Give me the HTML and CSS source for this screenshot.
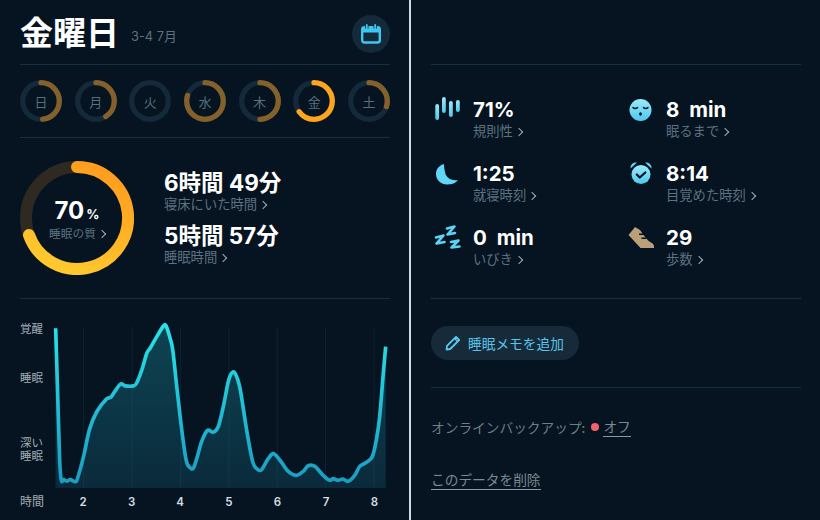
FILE: index.html
```html
<!DOCTYPE html>
<html lang="ja">
<head>
<meta charset="utf-8">
<title>金曜日</title>
<link rel="stylesheet" href="styles.css">
</head>
<body>
<div class="app">
  <section class="panel left">
    <header class="head">
      <div class="title"><h1>金曜日</h1><span class="range">3-4 7月</span></div>
      <button class="cal" aria-label="カレンダー">
        <svg viewBox="0 0 20 20" width="20" height="20"><rect x="1.200" y="3.200" width="17.600" height="15.300" rx="2.200" fill="none" stroke="#3fc8ee" stroke-width="2.400"/><path d="M1.500 3h17v5.500h-17z" fill="#3fc8ee"/><path d="M5.800 .5v4M14.200 .5v4" stroke="#14293a" stroke-width="3.400"/><path d="M5.800 1v3.500M14.200 1v3.500" stroke="#3fc8ee" stroke-width="1.800" stroke-linecap="round"/></svg>
      </button>
    </header>
    <div class="week">
      <div class="day"><svg viewBox="0 0 42 42"><circle class="track" cx="21" cy="21" r="18.300"/><circle class="arc" cx="21" cy="21" r="18.300" pathLength="100" stroke-dasharray="48.500 100"/></svg><span>日</span></div>
      <div class="day"><svg viewBox="0 0 42 42"><circle class="track" cx="21" cy="21" r="18.300"/><circle class="arc" cx="21" cy="21" r="18.300" pathLength="100" stroke-dasharray="41 100"/></svg><span>月</span></div>
      <div class="day"><svg viewBox="0 0 42 42"><circle class="track" cx="21" cy="21" r="18.300"/></svg><span>火</span></div>
      <div class="day"><svg viewBox="0 0 42 42"><circle class="track" cx="21" cy="21" r="18.300"/><circle class="arc" cx="21" cy="21" r="18.300" pathLength="100" stroke-dasharray="80 100"/></svg><span>水</span></div>
      <div class="day"><svg viewBox="0 0 42 42"><circle class="track" cx="21" cy="21" r="18.300"/><circle class="arc" cx="21" cy="21" r="18.300" pathLength="100" stroke-dasharray="50 100"/></svg><span>木</span></div>
      <div class="day"><svg viewBox="0 0 42 42"><circle class="track" cx="21" cy="21" r="18.300"/><circle class="arc now" cx="21" cy="21" r="18.300" pathLength="100" stroke-dasharray="65 100"/></svg><span>金</span></div>
      <div class="day"><svg viewBox="0 0 42 42"><circle class="track" cx="21" cy="21" r="18.300"/><circle class="arc" cx="21" cy="21" r="18.300" pathLength="100" stroke-dasharray="30 100"/></svg><span>土</span></div>
    </div>
    <div class="summary">
      <div class="quality">
        <svg viewBox="0 0 114 114" width="114" height="114">
          <defs><linearGradient id="gold" x1="0.7" y1="0" x2="0.3" y2="1"><stop offset="0" stop-color="#ff9d1e"/><stop offset="1" stop-color="#ffc92e"/></linearGradient></defs>
          <circle cx="57" cy="57" r="51" fill="none" stroke="#2e2a22" stroke-width="12"/>
          <path d="M57 6A51 51 0 1 1 9 74" fill="none" stroke="url(#gold)" stroke-width="12" stroke-linecap="round"/>
        </svg>
        <div class="q-text">
          <div class="q-num">70<small>%</small></div>
          <div class="label small">睡眠の質<i class="chev"></i></div>
        </div>
      </div>
      <div class="stats">
        <div class="big">6時間 49分</div>
        <div class="label">寝床にいた時間<i class="chev"></i></div>
        <div class="big second">5時間 57分</div>
        <div class="label">睡眠時間<i class="chev"></i></div>
      </div>
    </div>
    <div class="chart">
      <div class="y-axis">
        <div class="y1">覚醒</div>
        <div class="y2">睡眠</div>
        <div class="y3">深い</div>
        <div class="y4">睡眠</div>
      </div>
      <svg class="plot" viewBox="150 30 1020 520" width="340" height="173">
        <defs>
          <linearGradient id="line" gradientUnits="userSpaceOnUse" x1="0" y1="45" x2="0" y2="520"><stop offset="0" stop-color="#27e3ea"/><stop offset="1" stop-color="#1a9cc0"/></linearGradient>
          <linearGradient id="area" gradientUnits="userSpaceOnUse" x1="0" y1="45" x2="0" y2="535"><stop offset="0" stop-color="#0e4452"/><stop offset="1" stop-color="#0a2a3b"/></linearGradient>
        </defs>
        <path id="curve-area" fill="url(#area)"/>
        <path class="grid" d="M250 50V535M396 50V535M541 50V535M687 50V535M832 50V535M977 50V535M1123 50V535"/>
        <path id="curve-line" fill="none" stroke="url(#line)" stroke-width="11" stroke-linejoin="round" stroke-linecap="butt"/>
      </svg>
      <span class="x-title">時間</span>
      <div class="ticks"><span>2</span><span>3</span><span>4</span><span>5</span><span>6</span><span>7</span><span>8</span></div>
    </div>
  </section>
  <div class="divider"></div>
  <section class="panel right">
    <div class="top-space"></div>
    <div class="metrics">
      <div class="metric">
        <svg class="icon" viewBox="0 0 32 32"><defs><linearGradient id="sky" x1="0" y1="0" x2="0" y2="1"><stop offset="0" stop-color="#9beaf8"/><stop offset="1" stop-color="#4cc9f0"/></linearGradient></defs><g fill="url(#sky)"><rect x="4.300" y="10" width="3.800" height="16" rx="1.900"/><rect x="11" y="3" width="3.800" height="16" rx="1.900"/><rect x="18" y="7" width="3.800" height="16" rx="1.900"/><rect x="25" y="6" width="3.800" height="12" rx="1.900"/></g></svg>
        <div><div class="val">71%</div><div class="label">規則性<i class="chev"></i></div></div>
      </div>
      <div class="metric">
        <svg class="icon" viewBox="0 0 32 32"><circle cx="15.500" cy="16" r="11" fill="url(#sky)"/><path d="M8 13.500c1.100 1.400 3.400 1.400 4.500 0M18.500 13.500c1.100 1.400 3.400 1.400 4.500 0" fill="none" stroke="#05121d" stroke-width="1.500" stroke-linecap="round"/><ellipse cx="15.500" cy="20" rx="1.400" ry="1.700" fill="#05121d"/></svg>
        <div><div class="val">8 min</div><div class="label">眠るまで<i class="chev"></i></div></div>
      </div>
      <div class="metric">
        <svg class="icon" viewBox="0 0 32 32"><path d="M13 6C7 8 5 12 5 16C5 22 10 26.500 16 26.500C21 26.500 25 25 27 22C21 23 16 20 14.500 16C13.500 12 13 9 13 6z" fill="#62d6f5"/></svg>
        <div><div class="val">1:25</div><div class="label">就寝時刻<i class="chev"></i></div></div>
      </div>
      <div class="metric">
        <svg class="icon" viewBox="0 0 32 32"><path d="M5.500 10.500A5.500 5.500 0 0 1 12 4.500zM26.500 10.500A5.500 5.500 0 0 0 20 4.500z" fill="#62d6f5"/><circle cx="16" cy="16.500" r="9.500" fill="url(#sky)"/><path d="M11.800 16.500l3 3 5.500-5" fill="none" stroke="#05121d" stroke-width="2.200" stroke-linecap="round" stroke-linejoin="round"/></svg>
        <div><div class="val">8:14</div><div class="label">目覚めた時刻<i class="chev"></i></div></div>
      </div>
      <div class="metric">
        <svg class="icon" viewBox="0 0 32 32"><g fill="none" stroke="#5ed2f2" stroke-width="2.600" stroke-linejoin="round" stroke-linecap="round"><path d="M5 15.500L12.500 13.500L5.500 21.500L13.500 20"/><path d="M16 6.500L23.500 4.500L16.500 12.500L24 11"/><path d="M20 20L27.500 18.500L20.500 25.500L28.500 24.500"/></g></svg>
        <div><div class="val">0 min</div><div class="label">いびき<i class="chev"></i></div></div>
      </div>
      <div class="metric">
        <svg class="icon" viewBox="0 0 32 32"><path d="M10 5L3.500 13L15.500 26H29C29.500 23 28 21.500 26 20.500C23 19 20 15 15 8z" fill="#b9a079"/><path d="M14 12.300h5M16.500 16.300h5" stroke="#05121d" stroke-width="1.500"/></svg>
        <div><div class="val">29</div><div class="label">歩数<i class="chev"></i></div></div>
      </div>
    </div>
    <div class="memo">
      <button class="pill">
        <svg viewBox="0 0 16 16" width="16" height="16"><path d="M11 1.800l3.200 3.200L5.200 14 1.500 14.500 2 10.800z" fill="none" stroke="#59c8ec" stroke-width="1.800" stroke-linejoin="round"/><path d="M9.500 3.500l3 3" stroke="#59c8ec" stroke-width="1.400"/></svg>
        睡眠メモを追加
      </button>
    </div>
    <div class="foot">
      <p class="backup">オンラインバックアップ:<i class="dot"></i><span class="link">オフ</span></p>
      <p class="delete"><span class="link">このデータを削除</span></p>
    </div>
  </section>
</div>
<script src="script.js"></script>
</body>
</html>
```
FILE: styles.css
```css
* { box-sizing: border-box; }
html, body { margin: 0; padding: 0; }
body {
  width: 820px;
  height: 520px;
  overflow: hidden;
  background: #051420;
  color: #fff;
  font-family: "Inter", "Noto Sans CJK JP", sans-serif;
}
.app { display: flex; height: 520px; }
.panel { display: flex; flex-direction: column; }
.left { width: 409px; padding: 0 19px 0 20px; }
.divider { width: 2px; background: #d0d8e0; }
.right { width: 409px; padding: 0 19px 0 20px; }

.head {
  height: 65px;
  border-bottom: 1px solid #15303f;
  display: flex;
  align-items: center;
  justify-content: space-between;
  padding-bottom: 3px;
}
.title { display: flex; align-items: flex-end; gap: 12px; }
h1 { margin: 0; font-size: 33px; line-height: 42px; font-weight: 700; font-family: "Noto Sans CJK JP", sans-serif; }
.range { font-size: 12.800px; color: #5f7180; line-height: 30px; white-space: nowrap; }
.cal {
  width: 38px; height: 38px; border: 0; border-radius: 50%;
  background: #14293a; padding: 0; margin-top: 6px;
  display: flex; align-items: center; justify-content: center;
}

.week {
  height: 73px;
  border-bottom: 1px solid #15303f;
  display: flex;
  align-items: center;
  justify-content: space-between;
}
.day { width: 42px; height: 42px; display: grid; place-items: center; }
.day > * { grid-area: 1 / 1; }
.day svg { width: 42px; height: 42px; transform: rotate(-90deg); }
.day span { font-size: 13px; color: #5b6e7c; }
.track { fill: none; stroke: #14293a; stroke-width: 5.300; }
.arc { fill: none; stroke: #84602a; stroke-width: 5.300; stroke-linecap: round; }
.arc.now { stroke: #ffa41f; }

.summary {
  height: 161px;
  border-bottom: 1px solid #15303f;
  display: flex;
  align-items: center;
  gap: 30px;
}
.quality { width: 114px; height: 114px; display: grid; place-items: center; }
.quality > * { grid-area: 1 / 1; }
.q-text { text-align: center; padding-top: 6px; }
.q-num { font-size: 24px; line-height: 22px; font-weight: 700; }
.q-num small { font-size: 13px; margin-left: 2px; }
.label { font-size: 13.300px; line-height: 18px; color: #5d7180; white-space: nowrap; }
.label.small { font-size: 11.700px; }
.chev {
  display: inline-block; width: 6px; height: 6px; margin: 0 0 1px 3px;
  border-top: 1.500px solid #9db0bc; border-right: 1.500px solid #9db0bc;
  transform: rotate(45deg);
}
.stats { margin-bottom: 2px; }
.big { font-size: 22.500px; line-height: 28px; font-weight: 700; white-space: nowrap; }
.big + .label { margin-top: -2px; }
.big.second { margin-top: 9px; }

.chart {
  padding-top: 21px;
  display: grid;
  grid-template-columns: 30px 340px;
  grid-template-rows: 173px 18px;
}
.y-axis { display: flex; flex-direction: column; font-size: 11.500px; line-height: 13px; color: #a2acb3; padding-top: 3px; }
.y1, .y2, .y3, .y4 { height: 13px; overflow: visible; white-space: nowrap; }
.y2 { margin-top: 36px; }
.y3 { margin-top: 52px; }
.plot { display: block; }
.grid { stroke: rgba(50, 105, 125, 0.28); stroke-width: 2; fill: none; }
.x-title { font-size: 12px; line-height: 18px; color: #a2acb3; }
.ticks { display: flex; padding-left: 8.700px; font-size: 11.500px; line-height: 18px; font-weight: 600; color: #d5dde2; }
.ticks span { flex: none; width: 48.600px; text-align: center; }

.top-space { height: 65px; border-bottom: 1px solid #15303f; flex: none; }
.metrics {
  height: 234px;
  border-bottom: 1px solid #15303f;
  padding-top: 29px;
  display: grid;
  grid-template-columns: 194px 1fr;
  grid-auto-rows: 64px;
}
.metric { display: flex; gap: 10px; }
.metric:nth-child(even) { gap: 9px; }
.icon { width: 32px; height: 32px; flex: none; }
.val { font-size: 20.500px; line-height: 26px; font-weight: 700; margin-top: 3px; word-spacing: 5px; }
.val + .label { margin-top: -1px; }

.memo { height: 89px; border-bottom: 1px solid #15303f; padding-top: 27px; }
.pill {
  height: 34px; width: 148px; border: 0; border-radius: 17px;
  background: #162a3a; color: #59c4e8;
  font: 13.700px/34px "Noto Sans CJK JP", sans-serif;
  display: flex; align-items: center; gap: 7px; padding: 0 0 0 14px;
}
.foot { font-size: 13.700px; color: #6f7d86; font-family: "Noto Sans CJK JP", sans-serif; }
.foot p { margin: 0; line-height: 20px; }
.backup { display: flex; align-items: center; padding-top: 28px; }
.dot { width: 8px; height: 8px; border-radius: 50%; background: #f4606a; margin: 0 4px 0 6px; }
.link { border-bottom: 1px solid #8a98a1; color: #7c8a93; }
.delete { margin-top: 32px !important; }
```
FILE: script.js
```js
var points = [[166,55],[172,250],[178,450],[183,512],[190,510],[200,514],[210,510],[225,516],[232,505],[250,440],[268,358],[290,305],[318,268],[332,262],[345,243],[362,222],[375,228],[400,228],[410,218],[425,180],[440,130],[450,115],[470,80],[490,48],[498,48],[510,85],[518,120],[530,230],[545,360],[558,450],[568,472],[580,475],[592,440],[605,395],[622,362],[640,367],[655,350],[670,290],[685,215],[695,190],[705,190],[720,235],[740,360],[758,455],[772,478],[785,480],[805,447],[822,432],[845,458],[865,485],[890,497],[910,485],[925,468],[945,470],[970,497],[990,512],[1000,507],[1015,512],[1030,508],[1045,515],[1065,497],[1080,470],[1100,458],[1118,440],[1130,390],[1140,320],[1150,200],[1158,110]];

function smooth(pts) {
  var d = "M" + pts[0][0] + " " + pts[0][1];
  for (var i = 0; i < pts.length - 1; i++) {
    var p0 = pts[Math.max(i - 1, 0)];
    var p1 = pts[i];
    var p2 = pts[i + 1];
    var p3 = pts[Math.min(i + 2, pts.length - 1)];
    var k = 1 / 6;
    d += "C" + (p1[0] + (p2[0] - p0[0]) * k) + " " + (p1[1] + (p2[1] - p0[1]) * k) +
         " " + (p2[0] - (p3[0] - p1[0]) * k) + " " + (p2[1] - (p3[1] - p1[1]) * k) +
         " " + p2[0] + " " + p2[1];
  }
  return d;
}

var line = smooth(points);
document.getElementById("curve-line").setAttribute("d", line);
document.getElementById("curve-area").setAttribute("d", line + "V535H166Z");
```
